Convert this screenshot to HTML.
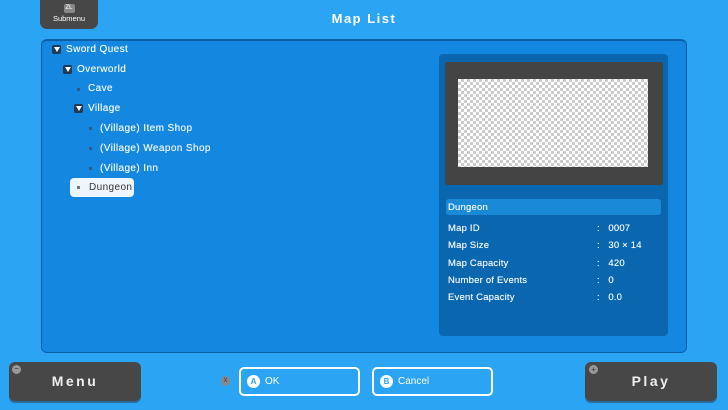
<!DOCTYPE html><html><head><style>
body{margin:0;width:728px;height:410px;background:#2ba4f4;font-family:"Liberation Sans",sans-serif;position:relative;overflow:hidden;color:#eaf4ff}
.a{position:absolute}
.title{left:0;width:728px;top:11px;text-align:center;font-weight:bold;font-size:13px;letter-spacing:1.5px;color:#fff}
.sub{left:40px;top:-8px;width:58px;height:37px;background:#474747;border-radius:0 0 7px 7px;font-size:7.5px;color:#fff;text-align:center}
.main{left:41px;top:39px;width:644px;height:311px;background:#1488e0;border:1px solid #0c5fa6;border-top:2px solid #0c5fa6;border-radius:6px}
.t{font-size:10px;color:#eef6ff;letter-spacing:.4px;text-shadow:0 0 .4px #fff}
.tri{width:9px;height:9px;background:#1f3a55;border-radius:2px}
.tri:after{content:"";position:absolute;left:1.5px;top:2px;border-left:3px solid transparent;border-right:3px solid transparent;border-top:5px solid #fff}
.dot{width:3px;height:3px;background:#2b5c8e}
.right{left:439px;top:54px;width:229px;height:282px;background:#0b66b0;border-radius:4px}
.prev{left:445px;top:62px;width:218px;height:123px;background:#444;border-radius:2px}
.chk{left:458px;top:79px;width:190px;height:88px;background-color:#fff;background-image:linear-gradient(45deg,#ccc 25%,transparent 25%,transparent 75%,#ccc 75%),linear-gradient(45deg,#ccc 25%,transparent 25%,transparent 75%,#ccc 75%);background-size:6px 6px;background-position:0 0,3px 3px}
.info{font-size:9.5px;color:#eef6ff;letter-spacing:.2px;text-shadow:0 0 .4px #fff}
.btn{background:#474747;border-radius:6px;color:#eee;font-weight:bold;font-size:14px;letter-spacing:2.5px;text-align:center;box-shadow:0 2px 0 #2a6aa0}
.ob{border:2px solid #fff;border-radius:5px;background:#2ba4f4;color:#fff;font-size:10px}
.circ{width:13px;height:13px;border-radius:50%;background:#fff;color:#2ba4f4;font-size:8px;font-weight:bold;text-align:center;line-height:13px}
</style></head><body>
<div class="a title">Map List</div>
<div class="a sub"><div style="margin:12px auto 0;width:11px;height:9px;background:#888;border-radius:2px;font-size:6px;line-height:9px">ZL</div><div style="margin-top:1px">Submenu</div></div>
<div class="a main"></div>
<div class="a tri" style="left:52px;top:45px"></div><div class="a t" style="left:66px;top:44px">Sword Quest</div>
<div class="a tri" style="left:63px;top:65px"></div><div class="a t" style="left:77px;top:64px">Overworld</div>
<div class="a dot" style="left:77px;top:88px"></div><div class="a t" style="left:88px;top:83px">Cave</div>
<div class="a tri" style="left:74px;top:104px"></div><div class="a t" style="left:88px;top:103px">Village</div>
<div class="a dot" style="left:89px;top:127px"></div><div class="a t" style="left:100px;top:123px">(Village) Item Shop</div>
<div class="a dot" style="left:89px;top:147px"></div><div class="a t" style="left:100px;top:143px">(Village) Weapon Shop</div>
<div class="a dot" style="left:89px;top:167px"></div><div class="a t" style="left:100px;top:163px">(Village) Inn</div>
<div class="a" style="left:70px;top:178px;width:64px;height:19px;background:#eef6fc;border-radius:4px"></div>
<div class="a dot" style="left:77px;top:186px;background:#777"></div><div class="a t" style="left:89px;top:182px;color:#333;text-shadow:none">Dungeon</div>
<div class="a right"></div><div class="a prev"></div><div class="a chk"></div>
<div class="a" style="left:446px;top:199px;width:215px;height:16px;background:#1a8ad6;border-radius:3px"></div>
<div class="a info" style="left:448px;top:202px">Dungeon</div>
<div class="a info" style="left:448px;top:223px">Map ID</div><div class="a info" style="left:597px;top:223px">:&nbsp;&nbsp; 0007</div>
<div class="a info" style="left:448px;top:240px">Map Size</div><div class="a info" style="left:597px;top:240px">:&nbsp;&nbsp; 30 × 14</div>
<div class="a info" style="left:448px;top:258px">Map Capacity</div><div class="a info" style="left:597px;top:258px">:&nbsp;&nbsp; 420</div>
<div class="a info" style="left:448px;top:275px">Number of Events</div><div class="a info" style="left:597px;top:275px">:&nbsp;&nbsp; 0</div>
<div class="a info" style="left:448px;top:292px">Event Capacity</div><div class="a info" style="left:597px;top:292px">:&nbsp;&nbsp; 0.0</div>
<div class="a btn" style="left:9px;top:362px;width:132px;height:39px;line-height:39px">Menu</div>
<div class="a" style="left:12px;top:365px;width:9px;height:9px;border-radius:50%;background:#999;font-size:8px;line-height:8px;text-align:center;color:#333">−</div>
<div class="a btn" style="left:585px;top:362px;width:132px;height:39px;line-height:39px">Play</div>
<div class="a" style="left:589px;top:365px;width:9px;height:9px;border-radius:50%;background:#999;font-size:8px;line-height:9px;text-align:center;color:#333">+</div>
<div class="a" style="left:221px;top:376px;width:9px;height:10px;border-radius:50%;background:#888;font-size:6px;line-height:10px;text-align:center;color:#333">X</div>
<div class="a ob" style="left:239px;top:367px;width:117px;height:25px"><div class="a circ" style="left:6px;top:6px">A</div><div class="a" style="left:24px;top:7px">OK</div></div>
<div class="a ob" style="left:372px;top:367px;width:117px;height:25px"><div class="a circ" style="left:6px;top:6px">B</div><div class="a" style="left:24px;top:7px">Cancel</div></div>
</body></html>
